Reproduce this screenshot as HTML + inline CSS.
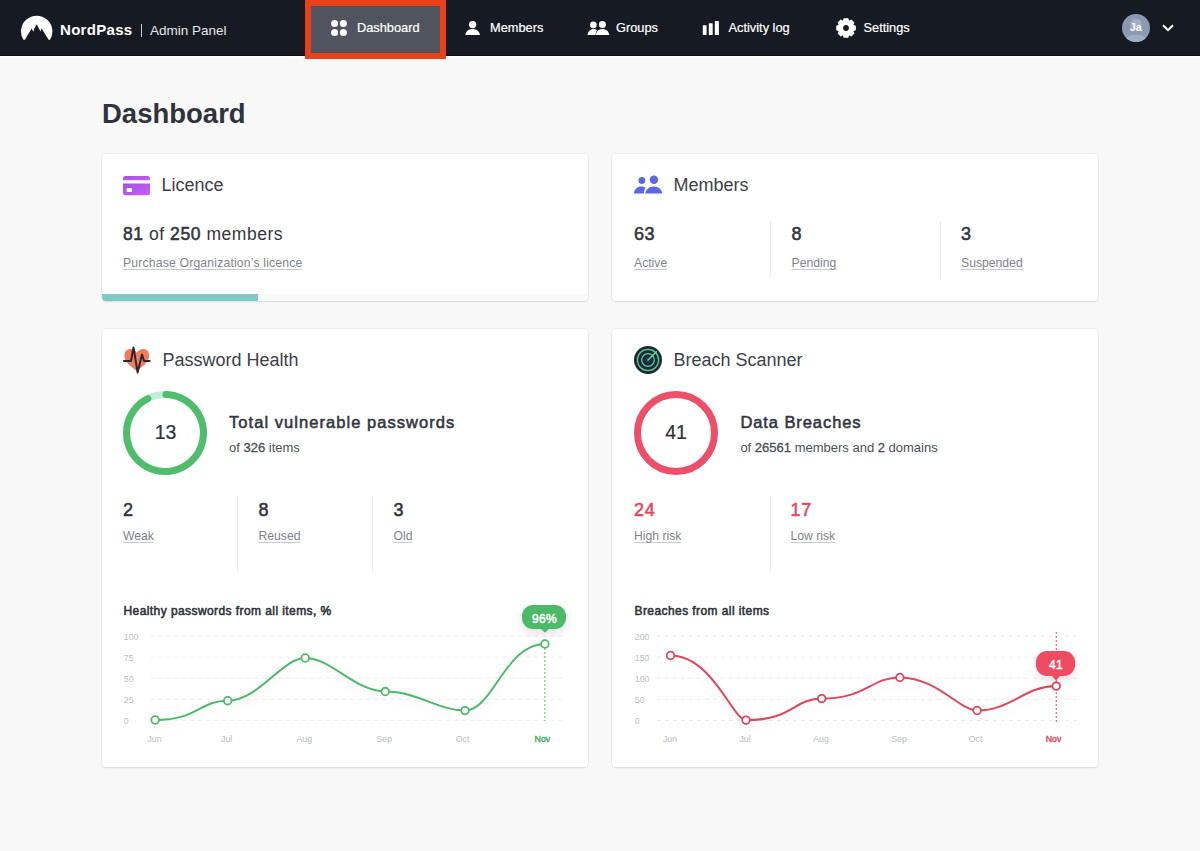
<!DOCTYPE html><html><head><meta charset="utf-8"><style>
html,body{margin:0;padding:0;}
body{width:1200px;height:851px;overflow:hidden;background:#f8f8f8;position:relative;font-family:"Liberation Sans",sans-serif;}
.t{position:absolute;line-height:1;white-space:nowrap;}
.a{position:absolute;}
.card{position:absolute;background:#fff;border-radius:4px;box-shadow:0 0 0 1px rgba(0,0,0,0.035),0 1px 2px rgba(0,0,0,0.09);}
.u{text-decoration:underline;text-decoration-color:#c9cbcf;text-underline-offset:2px;}
</style></head><body>
<div class="a" style="left:0;top:0;width:1200px;height:56px;background:#161a22;"></div>
<div class="a" style="left:0;top:55px;width:1200px;height:1px;background:#0b0d11;"></div><div class="a" style="left:0;top:56px;width:1200px;height:2px;background:#ffffff;"></div>
<div class="a" style="left:305px;top:0;width:129px;height:47px;border:6px solid #e8421a;background:#50545e;"></div>
<svg class="a" style="left:20px;top:15px" width="34" height="27" viewBox="0 0 34 27">
<path d="M3.4 24.8 A15.7 15.7 0 1 1 30.0 24.8 L28.6 24.8 L21.6 13.6 L20.5 16.4 L18.9 13.4 L16.6 9.2 L14.3 13.6 L13.4 16.8 L11.6 13.6 L4.9 24.8 Z" fill="#fff"/>
</svg>
<div class="t" style="left:60px;top:22.30px;font-size:15px;color:#fff;font-weight:700;letter-spacing:0.3px;">NordPass</div>
<div class="a" style="left:140.5px;top:24px;width:1.3px;height:13px;background:#c9ccd2;"></div>
<div class="t" style="left:150px;top:23.57px;font-size:13.5px;color:#e6e8eb;font-weight:400;">Admin Panel</div>
<svg class="a" style="left:331px;top:20px" width="16" height="16" viewBox="0 0 16 16" fill="#fff">
<circle cx="3.6" cy="3.6" r="3.5"/><circle cx="12.4" cy="3.6" r="3.5"/><circle cx="3.6" cy="12.4" r="3.5"/><circle cx="12.4" cy="12.4" r="3.5"/></svg>
<div class="t" style="left:357px;top:21.66px;font-size:12.8px;color:#fff;font-weight:400;-webkit-text-stroke:0.2px #fff;">Dashboard</div>
<svg class="a" style="left:464px;top:20px" width="18" height="16" viewBox="0 0 18 16" fill="#fff">
<circle cx="8.6" cy="4.6" r="3.7"/><path d="M1.3 15.1 C1.8 11.2 4.8 9.1 8.6 9.1 C12.4 9.1 15.4 11.2 15.9 15.1 Z"/></svg>
<div class="t" style="left:490px;top:21.66px;font-size:12.8px;color:#fff;font-weight:400;-webkit-text-stroke:0.2px #fff;">Members</div>
<svg class="a" style="left:586px;top:20px" width="24" height="16" viewBox="0 0 24 16" fill="#fff">
<circle cx="7.4" cy="4.9" r="3.3"/><circle cx="16.4" cy="4.6" r="3.5"/>
<path d="M1.6 15.1 C1.9 11.6 4.4 9.1 7.6 9.1 C9 9.1 10.2 9.5 11 10.2 C10.2 11.5 9.8 13.2 9.6 15.1 Z"/>
<path d="M9.8 15.1 C10.2 11.3 12.8 9.1 16.5 9.1 C20.2 9.1 22.8 11.3 23.2 15.1 Z"/></svg>
<div class="t" style="left:616px;top:21.66px;font-size:12.8px;color:#fff;font-weight:400;-webkit-text-stroke:0.2px #fff;">Groups</div>
<svg class="a" style="left:702px;top:20px" width="18" height="16" viewBox="0 0 18 16" fill="#fff">
<rect x="0.8" y="5.2" width="3.8" height="9.8" rx="0.6"/><rect x="6.8" y="3.2" width="3.9" height="11.8" rx="0.6"/><rect x="12.8" y="0.9" width="4.1" height="14.1" rx="0.6"/></svg>
<div class="t" style="left:728.5px;top:21.66px;font-size:12.8px;color:#fff;font-weight:400;-webkit-text-stroke:0.2px #fff;">Activity log</div>
<svg class="a" style="left:836px;top:18px" width="20" height="20" viewBox="0 0 20 20">
<path fill="#fff" stroke="#fff" stroke-width="1.2" stroke-linejoin="round" d="M7.31,3.64 L8.13,0.79 L11.87,0.79 L12.69,3.64 L12.59,3.61 L15.19,2.17 L17.83,4.81 L16.39,7.41 L16.36,7.31 L19.21,8.13 L19.21,11.87 L16.36,12.69 L16.39,12.59 L17.83,15.19 L15.19,17.83 L12.59,16.39 L12.69,16.36 L11.87,19.21 L8.13,19.21 L7.31,16.36 L7.41,16.39 L4.81,17.83 L2.17,15.19 L3.61,12.59 L3.64,12.69 L0.79,11.87 L0.79,8.13 L3.64,7.31 L3.61,7.41 L2.17,4.81 L4.81,2.17 L7.41,3.61 Z"/><circle cx="10" cy="10" r="2.9" fill="#161a22"/></svg>
<div class="t" style="left:863.5px;top:21.66px;font-size:12.8px;color:#fff;font-weight:400;-webkit-text-stroke:0.2px #fff;">Settings</div>
<svg class="a" style="left:1122px;top:14px" width="28" height="28" viewBox="0 0 28 28">
<defs><clipPath id="av"><circle cx="14" cy="14" r="14"/></clipPath></defs>
<circle cx="14" cy="14" r="14" fill="#8b99b1"/>
<g clip-path="url(#av)" fill="#a2aec1"><circle cx="14" cy="10.5" r="5.8"/><ellipse cx="14" cy="28.5" rx="11.5" ry="8"/></g>
</svg>
<div class="t" style="left:835.8px;width:600px;text-align:center;top:22.46px;font-size:10.8px;color:#fff;font-weight:700;">Ja</div>
<svg class="a" style="left:1160px;top:22px" width="16" height="12" viewBox="0 0 16 12">
<path d="M3 3.2 L8 8.2 L13 3.2" stroke="#fff" stroke-width="2" fill="none"/></svg>
<div class="t" style="left:102px;top:99.52px;font-size:27.5px;color:#30333b;font-weight:700;">Dashboard</div>
<div class="card" style="left:101.5px;top:154px;width:486px;height:147px;overflow:hidden;"><div class="a" style="left:0;bottom:0;width:486px;height:7px;background:#f9f9f9;"></div><div class="a" style="left:0;bottom:0;width:156px;height:7px;background:#7ecbc6;"></div></div>
<div class="card" style="left:612px;top:154px;width:486px;height:147px;"></div>
<div class="card" style="left:101.5px;top:328.5px;width:486px;height:438.5px;"></div>
<div class="card" style="left:612px;top:328.5px;width:486px;height:438.5px;"></div>
<svg class="a" style="left:123px;top:175.5px" width="27" height="20" viewBox="0 0 27 20">
<defs><linearGradient id="lg" x1="0" y1="0" x2="1" y2="1"><stop offset="0" stop-color="#a64fe6"/><stop offset="1" stop-color="#c761f2"/></linearGradient></defs>
<path d="M2.5 0 H24.5 A2.5 2.5 0 0 1 27 2.5 V4.3 H0 V2.5 A2.5 2.5 0 0 1 2.5 0 Z" fill="url(#lg)"/>
<path d="M0 7.6 H27 V16.8 A2.5 2.5 0 0 1 24.5 19.3 H2.5 A2.5 2.5 0 0 1 0 16.8 Z" fill="url(#lg)"/>
<rect x="3.6" y="12" width="5.4" height="4" rx="0.8" fill="#fff"/></svg>
<div class="t" style="left:161.5px;top:175.96px;font-size:18px;color:#3d4048;font-weight:400;">Licence</div>
<div class="t" style="left:123px;top:225.69px;font-size:17.5px;color:#33363e;font-weight:400;letter-spacing:0.55px;"><span style="-webkit-text-stroke:0.55px #33363e">81</span> of <span style="-webkit-text-stroke:0.55px #33363e">250</span> members</div>
<div class="t" style="left:123px;top:256.57px;font-size:12.2px;color:#7f838a;font-weight:400;letter-spacing:0.18px;text-decoration:underline;text-decoration-color:#c8cacd;text-underline-offset:1.6px;text-decoration-skip-ink:none;">Purchase Organization’s licence</div>
<svg class="a" style="left:634px;top:174.5px" width="29" height="19" viewBox="0 0 29 19" fill="#5a66e6">
<circle cx="7.9" cy="5.5" r="3.4"/><circle cx="19.9" cy="4.7" r="4.2"/>
<path d="M0 18.5 C0.3 14.2 3.3 11.5 7.2 11.5 C9 11.5 10.5 12 11.6 12.8 C10.6 14.4 10 16.3 9.9 18.5 Z"/>
<path d="M11.3 18.5 C11.8 14.3 15 11.4 19.8 11.4 C24.6 11.4 27.8 14.3 28.3 18.5 Z"/></svg>
<div class="t" style="left:673.5px;top:175.96px;font-size:18px;color:#3d4048;font-weight:400;">Members</div>
<div class="t" style="left:634px;top:225.26px;font-size:18px;color:#33363e;font-weight:400;-webkit-text-stroke:0.55px #33363e;letter-spacing:0.6px;">63</div>
<div class="t" style="left:634px;top:256.57px;font-size:12.2px;color:#7f838a;font-weight:400;text-decoration:underline;text-decoration-color:#c8cacd;text-underline-offset:1.6px;text-decoration-skip-ink:none;">Active</div>
<div class="a" style="left:769.5px;top:221px;width:1px;height:57px;background:#eceded;"></div>
<div class="t" style="left:791.5px;top:225.26px;font-size:18px;color:#33363e;font-weight:400;-webkit-text-stroke:0.55px #33363e;">8</div>
<div class="t" style="left:791.5px;top:256.57px;font-size:12.2px;color:#7f838a;font-weight:400;text-decoration:underline;text-decoration-color:#c8cacd;text-underline-offset:1.6px;text-decoration-skip-ink:none;">Pending</div>
<div class="a" style="left:939.5px;top:221px;width:1px;height:57px;background:#eceded;"></div>
<div class="t" style="left:961px;top:225.26px;font-size:18px;color:#33363e;font-weight:400;-webkit-text-stroke:0.55px #33363e;">3</div>
<div class="t" style="left:961px;top:256.57px;font-size:12.2px;color:#7f838a;font-weight:400;text-decoration:underline;text-decoration-color:#c8cacd;text-underline-offset:1.6px;text-decoration-skip-ink:none;">Suspended</div>
<svg class="a" style="left:122px;top:345px" width="30" height="30" viewBox="0 0 30 30">
<path d="M14.8 26 C8.8 21.4 2.4 17 2.4 10.6 C2.4 6.6 5 3.9 8.3 3.9 C11.1 3.9 13.4 5.5 14.8 7.7 C16.2 5.5 18.5 3.9 21.3 3.9 C24.6 3.9 27.2 6.6 27.2 10.6 C27.2 17 20.8 21.4 14.8 26 Z" fill="#f47b5b"/>
<path d="M1.2 16 H9 L11.5 2.4 L15.6 27.4 L20 9.6 L22.1 16 H28.4" stroke="#262a36" stroke-width="2" fill="none" stroke-linejoin="round"/></svg>
<div class="t" style="left:162.5px;top:351.46px;font-size:18px;color:#3d4048;font-weight:400;">Password Health</div>
<svg class="a" style="left:123px;top:390.8px" width="84" height="84" viewBox="0 0 84 84">
<circle cx="42" cy="42" r="38.5" fill="none" stroke="#bdeed8" stroke-width="7"/>
<path d="M42.94 3.51 A38.5 38.5 0 1 1 24.82 7.55" fill="none" stroke="#4fbd6b" stroke-width="7" stroke-linecap="round"/></svg>
<div class="t" style="left:-134.5px;width:600px;text-align:center;top:423.19px;font-size:19.5px;color:#2f323a;font-weight:400;-webkit-text-stroke:0.2px #2f323a;">13</div>
<div class="t" style="left:229px;top:413.93px;font-size:16.5px;color:#33363e;font-weight:400;-webkit-text-stroke:0.55px #33363e;letter-spacing:1.05px;">Total vulnerable passwords</div>
<div class="t" style="left:229px;top:440.90px;font-size:13px;color:#4d5057;font-weight:400;">of <span style="-webkit-text-stroke:0.3px #44474e">326</span> items</div>
<div class="t" style="left:123px;top:500.76px;font-size:18px;color:#33363e;font-weight:400;-webkit-text-stroke:0.55px #33363e;">2</div>
<div class="t" style="left:123px;top:529.67px;font-size:12.2px;color:#7f838a;font-weight:400;text-decoration:underline;text-decoration-color:#c8cacd;text-underline-offset:1.6px;text-decoration-skip-ink:none;">Weak</div>
<div class="t" style="left:258.5px;top:500.76px;font-size:18px;color:#33363e;font-weight:400;-webkit-text-stroke:0.55px #33363e;">8</div>
<div class="t" style="left:258.5px;top:529.67px;font-size:12.2px;color:#7f838a;font-weight:400;text-decoration:underline;text-decoration-color:#c8cacd;text-underline-offset:1.6px;text-decoration-skip-ink:none;">Reused</div>
<div class="t" style="left:393.5px;top:500.76px;font-size:18px;color:#33363e;font-weight:400;-webkit-text-stroke:0.55px #33363e;">3</div>
<div class="t" style="left:393.5px;top:529.67px;font-size:12.2px;color:#7f838a;font-weight:400;text-decoration:underline;text-decoration-color:#c8cacd;text-underline-offset:1.6px;text-decoration-skip-ink:none;">Old</div>
<div class="a" style="left:236.5px;top:496px;width:1px;height:76px;background:#eceded;"></div>
<div class="a" style="left:371.5px;top:496px;width:1px;height:76px;background:#eceded;"></div>
<svg class="a" style="left:634px;top:346px" width="28" height="28" viewBox="0 0 28 28">
<circle cx="14" cy="14" r="14" fill="#1d2a3a"/>
<circle cx="14" cy="14" r="10.6" fill="none" stroke="#5dcd8e" stroke-width="1.25"/>
<circle cx="14" cy="14" r="6.3" fill="none" stroke="#5dcd8e" stroke-width="1.25"/>
<circle cx="14" cy="14" r="2.6" fill="#2b3a55"/>
<path d="M14 14 L22.4 5.8" stroke="#66d895" stroke-width="1.5" stroke-linecap="round"/></svg>
<div class="t" style="left:673.5px;top:351.46px;font-size:18px;color:#3d4048;font-weight:400;">Breach Scanner</div>
<svg class="a" style="left:634px;top:390.8px" width="84" height="84" viewBox="0 0 84 84">
<circle cx="42" cy="42" r="38.5" fill="none" stroke="#ee4f68" stroke-width="7"/></svg>
<div class="t" style="left:376px;width:600px;text-align:center;top:423.19px;font-size:19.5px;color:#2f323a;font-weight:400;-webkit-text-stroke:0.2px #2f323a;">41</div>
<div class="t" style="left:740.4px;top:413.93px;font-size:16.5px;color:#33363e;font-weight:400;-webkit-text-stroke:0.55px #33363e;letter-spacing:0.92px;">Data Breaches</div>
<div class="t" style="left:740.4px;top:440.90px;font-size:13px;color:#4d5057;font-weight:400;">of <span style="-webkit-text-stroke:0.3px #44474e">26561</span> members and <span style="-webkit-text-stroke:0.3px #44474e">2</span> domains</div>
<div class="t" style="left:634px;top:500.76px;font-size:18px;color:#e5485e;font-weight:400;-webkit-text-stroke:0.55px #e5485e;letter-spacing:0.8px;">24</div>
<div class="t" style="left:634px;top:529.67px;font-size:12.2px;color:#7f838a;font-weight:400;text-decoration:underline;text-decoration-color:#c8cacd;text-underline-offset:1.6px;text-decoration-skip-ink:none;">High risk</div>
<div class="t" style="left:790.5px;top:500.76px;font-size:18px;color:#e5485e;font-weight:400;-webkit-text-stroke:0.55px #e5485e;letter-spacing:0.8px;">17</div>
<div class="t" style="left:790.5px;top:529.67px;font-size:12.2px;color:#7f838a;font-weight:400;text-decoration:underline;text-decoration-color:#c8cacd;text-underline-offset:1.6px;text-decoration-skip-ink:none;">Low risk</div>
<div class="a" style="left:769.5px;top:496px;width:1px;height:76px;background:#eceded;"></div>
<div class="t" style="left:123.5px;top:604.84px;font-size:12px;color:#2f323a;font-weight:400;-webkit-text-stroke:0.55px #2f323a;letter-spacing:0.42px;">Healthy passwords from all items, %</div>
<div class="t" style="left:123.8px;top:632.65px;font-size:8.8px;color:#bcbfc3;font-weight:400;">100</div>
<div class="t" style="left:123.8px;top:653.75px;font-size:8.8px;color:#bcbfc3;font-weight:400;">75</div>
<div class="t" style="left:123.8px;top:674.85px;font-size:8.8px;color:#bcbfc3;font-weight:400;">50</div>
<div class="t" style="left:123.8px;top:695.95px;font-size:8.8px;color:#bcbfc3;font-weight:400;">25</div>
<div class="t" style="left:123.8px;top:717.05px;font-size:8.8px;color:#bcbfc3;font-weight:400;">0</div>
<div class="t" style="left:-145.5px;width:600px;text-align:center;top:734.85px;font-size:8.8px;color:#b9bcc0;font-weight:400;">Jun</div>
<div class="t" style="left:-73.4px;width:600px;text-align:center;top:734.85px;font-size:8.8px;color:#b9bcc0;font-weight:400;">Jul</div>
<div class="t" style="left:4.399999999999977px;width:600px;text-align:center;top:734.85px;font-size:8.8px;color:#b9bcc0;font-weight:400;">Aug</div>
<div class="t" style="left:84.30000000000001px;width:600px;text-align:center;top:734.85px;font-size:8.8px;color:#b9bcc0;font-weight:400;">Sep</div>
<div class="t" style="left:162.5px;width:600px;text-align:center;top:734.85px;font-size:8.8px;color:#b9bcc0;font-weight:400;">Oct</div>
<div class="t" style="left:242.39999999999998px;width:600px;text-align:center;top:734.85px;font-size:8.8px;color:#3fae5e;font-weight:400;-webkit-text-stroke:0.55px #3fae5e;-webkit-text-stroke-width:0.4px;">Nov</div>
<svg class="a" style="left:0;top:0" width="1200" height="851" viewBox="0 0 1200 851">
<defs><filter id="sh112" x="-20%" y="-20%" width="140%" height="160%"><feDropShadow dx="0" dy="6" stdDeviation="5" flood-color="#000" flood-opacity="0.06"/></filter></defs>
<g stroke="#eaebec" stroke-width="1" stroke-dasharray="3.5 4.5"><line x1="150.5" y1="636.0" x2="566" y2="636.0"/><line x1="150.5" y1="657.1" x2="566" y2="657.1"/><line x1="150.5" y1="678.2" x2="566" y2="678.2"/><line x1="150.5" y1="699.3" x2="566" y2="699.3"/><line x1="150.5" y1="720.4" x2="566" y2="720.4"/></g>
<line x1="544.9" y1="644" x2="544.9" y2="721" stroke="#4cba68" stroke-width="1" stroke-dasharray="2 2"/>
<path d="M155.10 720.00 C198.66 720.00 198.66 700.70 227.70 700.70 C258.72 700.70 281.99 658.00 305.25 658.00 C331.23 658.00 355.22 691.55 385.20 691.55 C417.12 691.55 439.06 710.60 465.00 710.60 C492.96 710.60 504.95 644.00 544.90 644.00" fill="none" stroke="#4cba68" stroke-width="2" filter="url(#sh112)"/>
<circle cx="155.1" cy="720" r="3.8" fill="#fff" stroke="#4cba68" stroke-width="1.8"/><circle cx="227.7" cy="700.7" r="3.8" fill="#fff" stroke="#4cba68" stroke-width="1.8"/><circle cx="305.25" cy="658" r="3.8" fill="#fff" stroke="#4cba68" stroke-width="1.8"/><circle cx="385.2" cy="691.55" r="3.8" fill="#fff" stroke="#4cba68" stroke-width="1.8"/><circle cx="465" cy="710.6" r="3.8" fill="#fff" stroke="#4cba68" stroke-width="1.8"/><circle cx="544.9" cy="644" r="3.8" fill="#fff" stroke="#4cba68" stroke-width="1.8"/>
</svg>
<div class="a" style="left:522.4px;top:604.9px;width:44.10000000000002px;height:24.300000000000068px;border-radius:11px;background:#4cba68;box-shadow:0 4px 10px rgba(0,0,0,0.12);"></div>
<svg class="a" style="left:539.9px;top:628.2px" width="10" height="4.7999999999999545" viewBox="0 0 10 4.7999999999999545"><path d="M0 0 H10 L5 4.7999999999999545 Z" fill="#4cba68"/></svg>
<div class="t" style="left:244.45000000000005px;width:600px;text-align:center;top:613.14px;font-size:12px;color:#fff;font-weight:400;-webkit-text-stroke:0.55px #fff;-webkit-text-stroke-width:0.45px;letter-spacing:0.3px;">96%</div>
<div class="t" style="left:634.5px;top:604.84px;font-size:12px;color:#2f323a;font-weight:400;-webkit-text-stroke:0.55px #2f323a;letter-spacing:0.42px;">Breaches from all items</div>
<div class="t" style="left:634.8px;top:632.65px;font-size:8.8px;color:#bcbfc3;font-weight:400;">200</div>
<div class="t" style="left:634.8px;top:653.75px;font-size:8.8px;color:#bcbfc3;font-weight:400;">150</div>
<div class="t" style="left:634.8px;top:674.85px;font-size:8.8px;color:#bcbfc3;font-weight:400;">100</div>
<div class="t" style="left:634.8px;top:695.95px;font-size:8.8px;color:#bcbfc3;font-weight:400;">50</div>
<div class="t" style="left:634.8px;top:717.05px;font-size:8.8px;color:#bcbfc3;font-weight:400;">0</div>
<div class="t" style="left:370px;width:600px;text-align:center;top:734.85px;font-size:8.8px;color:#b9bcc0;font-weight:400;">Jun</div>
<div class="t" style="left:445px;width:600px;text-align:center;top:734.85px;font-size:8.8px;color:#b9bcc0;font-weight:400;">Jul</div>
<div class="t" style="left:521px;width:600px;text-align:center;top:734.85px;font-size:8.8px;color:#b9bcc0;font-weight:400;">Aug</div>
<div class="t" style="left:599px;width:600px;text-align:center;top:734.85px;font-size:8.8px;color:#b9bcc0;font-weight:400;">Sep</div>
<div class="t" style="left:675.6px;width:600px;text-align:center;top:734.85px;font-size:8.8px;color:#b9bcc0;font-weight:400;">Oct</div>
<div class="t" style="left:753.5999999999999px;width:600px;text-align:center;top:734.85px;font-size:8.8px;color:#e0475c;font-weight:400;-webkit-text-stroke:0.55px #e0475c;-webkit-text-stroke-width:0.4px;">Nov</div>
<svg class="a" style="left:0;top:0" width="1200" height="851" viewBox="0 0 1200 851">
<defs><filter id="sh623" x="-20%" y="-20%" width="140%" height="160%"><feDropShadow dx="0" dy="6" stdDeviation="5" flood-color="#000" flood-opacity="0.06"/></filter></defs>
<g stroke="#eaebec" stroke-width="1" stroke-dasharray="3.5 4.5"><line x1="657" y1="636.0" x2="1078" y2="636.0"/><line x1="657" y1="657.1" x2="1078" y2="657.1"/><line x1="657" y1="678.2" x2="1078" y2="678.2"/><line x1="657" y1="699.3" x2="1078" y2="699.3"/><line x1="657" y1="720.4" x2="1078" y2="720.4"/></g>
<line x1="1056.25" y1="632" x2="1056.25" y2="723" stroke="#de465b" stroke-width="1" stroke-dasharray="2 2"/>
<path d="M670.50 655.50 C712.05 655.50 732.83 720.10 746.05 720.10 C793.33 720.10 793.33 698.60 821.70 698.60 C866.64 698.60 870.54 677.45 899.85 677.45 C936.54 677.45 959.72 710.50 977.10 710.50 C1010.74 710.50 1024.59 686.10 1056.25 686.10" fill="none" stroke="#de465b" stroke-width="2" filter="url(#sh623)"/>
<circle cx="670.5" cy="655.5" r="3.8" fill="#fff" stroke="#de465b" stroke-width="1.8"/><circle cx="746.05" cy="720.1" r="3.8" fill="#fff" stroke="#de465b" stroke-width="1.8"/><circle cx="821.7" cy="698.6" r="3.8" fill="#fff" stroke="#de465b" stroke-width="1.8"/><circle cx="899.85" cy="677.45" r="3.8" fill="#fff" stroke="#de465b" stroke-width="1.8"/><circle cx="977.1" cy="710.5" r="3.8" fill="#fff" stroke="#de465b" stroke-width="1.8"/><circle cx="1056.25" cy="686.1" r="3.8" fill="#fff" stroke="#de465b" stroke-width="1.8"/>
</svg>
<div class="a" style="left:1036.4px;top:651px;width:39.0px;height:24.5px;border-radius:11px;background:#ef4b63;box-shadow:0 4px 10px rgba(0,0,0,0.12);"></div>
<svg class="a" style="left:1051.25px;top:674.5px" width="10" height="5.5" viewBox="0 0 10 5.5"><path d="M0 0 H10 L5 5.5 Z" fill="#ef4b63"/></svg>
<div class="t" style="left:755.9000000000001px;width:600px;text-align:center;top:658.84px;font-size:12px;color:#fff;font-weight:400;-webkit-text-stroke:0.55px #fff;-webkit-text-stroke-width:0.45px;letter-spacing:0.3px;">41</div>
</body></html>
